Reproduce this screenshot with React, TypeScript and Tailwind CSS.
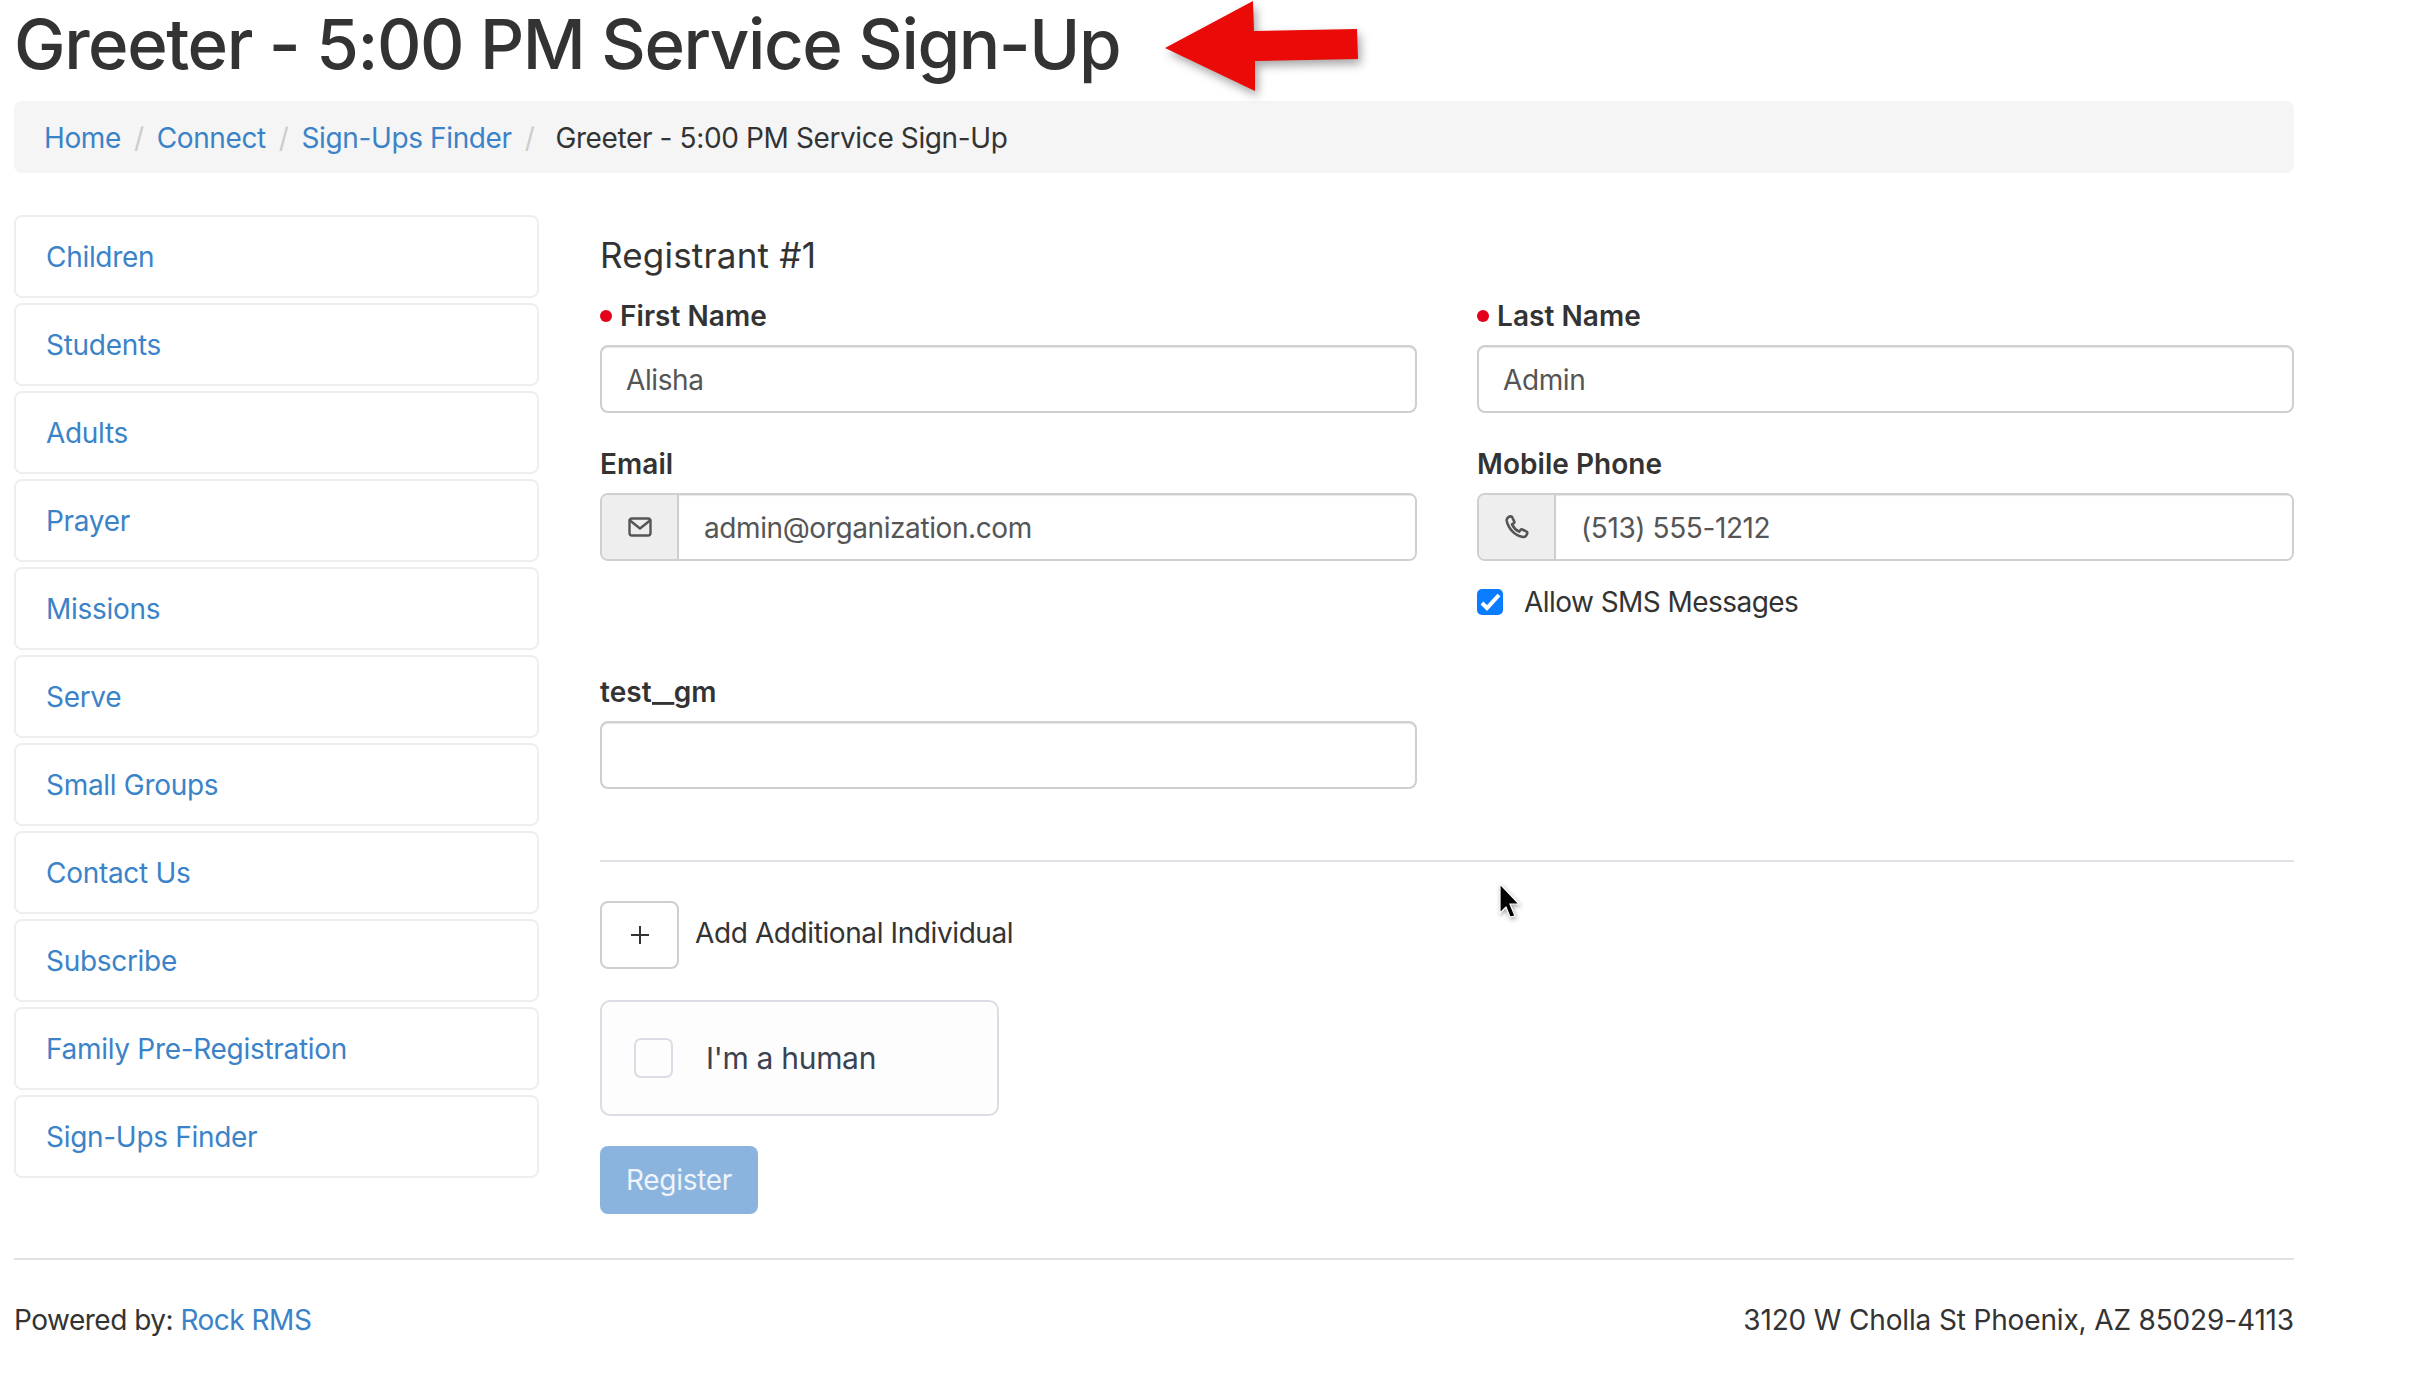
import React from "react";

const items = ["Children","Students","Adults","Prayer","Missions","Serve","Small Groups","Contact Us","Subscribe","Family Pre-Registration","Sign-Ups Finder"];

function MailIcon() {
  return (
    <svg width="24" height="20" viewBox="0 0 24 20" fill="none" stroke="#555" strokeWidth="2.4" strokeLinejoin="round" strokeLinecap="round">
      <rect x="1.5" y="1.5" width="21" height="17" rx="2.5" />
      <path d="M2 3.5 L12 11.5 L22 3.5" />
    </svg>
  );
}

function PhoneIcon() {
  return (
    <svg width="26" height="26" viewBox="0 0 24 24" fill="none" stroke="#555" strokeWidth="2.4" strokeLinejoin="round" strokeLinecap="round">
      <path d="M2.5 6.2C2.2 4.4 4 2.4 6 2.2c.9-.1 1.4.3 1.7 1l1.7 3.6c.3.7.1 1.3-.5 1.7L7.4 9.6c1.3 2.9 3.7 5.3 6.6 6.7l1.2-1.5c.4-.6 1.1-.8 1.7-.5l3.6 1.7c.7.3 1.1.9 1 1.7-.2 2-2.1 3.9-4 3.5C10 19.9 4 13.6 2.5 6.2Z" />
    </svg>
  );
}

function Label({ children, required }: { children: React.ReactNode; required?: boolean }) {
  return (
    <div className="h-[40px] mb-[10px] pt-[1px] flex items-center text-[28px] leading-[40px] font-semibold tracking-[0.05px] text-[#333]">
      {required && <span className="w-[12px] h-[12px] rounded-full bg-[#e2001a] mr-[8px]" />}
      <span>{children}</span>
    </div>
  );
}

function TextInput({ value }: { value: string }) {
  return (
    <input readOnly defaultValue={value} className="block w-full h-[68px] px-[24px] pt-[1px] text-[28px] tracking-[-0.4px] text-[#555] bg-white border-2 border-[#cfcfcf] rounded-[8px] outline-none shadow-[inset_0_1px_1px_rgba(0,0,0,0.1)]" />
  );
}

function AddonInput({ value, icon }: { value: string; icon: React.ReactNode }) {
  return (
    <div className="flex h-[68px] border-2 border-[#cfcfcf] rounded-[8px] overflow-hidden">
      <div className="w-[77px] shrink-0 bg-[#eeeeee] border-r-2 border-[#cfcfcf] flex items-center justify-center">{icon}</div>
      <input readOnly defaultValue={value} className="flex-1 px-[25px] pt-[1px] text-[28px] tracking-[-0.4px] text-[#555] bg-white outline-none shadow-[inset_0_1px_1px_rgba(0,0,0,0.1)]" />
    </div>
  );
}

export default function App() {
  return (
    <div className="relative w-[2430px] h-[1390px] bg-white overflow-hidden pl-[14px] text-[#333] text-[28px] tracking-[-0.3px] font-['Inter',sans-serif]">
      <div className="w-[2280px]">
        <h1 className="h-[101px] text-[69px] leading-[88px] tracking-[-1.45px] font-medium text-[#333] whitespace-nowrap">Greeter - 5:00 PM Service Sign-Up</h1>

        <nav className="h-[72px] rounded-[8px] bg-[#f5f5f5] flex items-center pl-[30px] pt-[2px] text-[28px] tracking-[-0.38px]">
          <a className="text-[#3b83c8]">Home</a>
          <span className="text-[#ccc] mx-[13px]">/</span>
          <a className="text-[#3b83c8]">Connect</a>
          <span className="text-[#ccc] mx-[13px]">/</span>
          <a className="text-[#3b83c8]">Sign-Ups Finder</a>
          <span className="text-[#ccc] ml-[13px] mr-[21px]">/</span>
          <span className="text-[#333]">Greeter - 5:00 PM Service Sign-Up</span>
        </nav>

        <div className="flex mt-[42px] gap-[60px]">
          <aside className="w-[525px] shrink-0 flex flex-col gap-[5px]">
            {items.map((t) => (
              <a key={t} className="h-[83px] flex items-center pl-[30px] pt-[1px] border-2 border-[#eeeeee] rounded-[8px] text-[#3b83c8] text-[28px]">{t}</a>
            ))}
          </aside>

          <main className="flex-1 pl-[1px] pt-[20px]">
            <h2 className="h-[40px] mb-[20px] text-[35px] leading-[40px] font-normal tracking-[0.2px] text-[#333]">Registrant #1</h2>
            <div className="grid grid-cols-[817px_817px] gap-x-[60px] gap-y-[30px]">
              <div>
                <Label required>First Name</Label>
                <TextInput value="Alisha" />
              </div>
              <div>
                <Label required>Last Name</Label>
                <TextInput value="Admin" />
              </div>
              <div className="h-[198px]">
                <Label>Email</Label>
                <AddonInput value="admin@organization.com" icon={<MailIcon />} />
              </div>
              <div className="h-[198px]">
                <Label>Mobile Phone</Label>
                <AddonInput value="(513) 555-1212" icon={<PhoneIcon />} />
                <label className="mt-[27px] flex items-center h-[28px] text-[#333] tracking-[-0.55px]">
                  <span className="w-[26px] h-[26px] mr-[21px] rounded-[5px] bg-[#0a7cff] flex items-center justify-center shrink-0">
                    <svg width="26" height="26" viewBox="0 0 26 26" fill="none" stroke="#fff" strokeWidth="4"><path d="M5 14 L10 19 L22 6" /></svg>
                  </span>
                  Allow SMS Messages
                </label>
              </div>
              <div>
                <Label>test<span className="inline-block w-[22px] origin-left scale-x-[1.7]">_</span>gm</Label>
                <TextInput value="" />
              </div>
            </div>

            <hr className="mt-[71px] border-0 h-[2px] bg-[#dee2e6]" />

            <div className="mt-[39px] flex items-center">
              <button className="w-[79px] h-[68px] bg-white border-2 border-[#cfcfcf] rounded-[8px] flex items-center justify-center">
                <svg width="20" height="20" viewBox="0 0 20 20" stroke="#333" strokeWidth="2"><path d="M10 1v18M1 10h18" /></svg>
              </button>
              <span className="ml-[16px] mb-[5px] text-[#333] tracking-[-0.4px]">Add Additional Individual</span>
            </div>

            <div className="mt-[31px] w-[399px] h-[116px] bg-[#fdfdfd] border-2 border-[#dcdce6] rounded-[10px] flex items-center pl-[32px]">
              <span className="w-[39px] h-[40px] bg-[#fdfdfd] border-2 border-[#dcdce6] rounded-[7px]" />
              <span className="ml-[33px] text-[30px] text-[#3b4252]">I'm a human</span>
            </div>

            <button className="mt-[30px] block w-[158px] h-[68px] rounded-[8px] bg-[#8ab3dd] text-[#eef4fb] text-[28px]">Register</button>
          </main>
        </div>

        <hr className="mt-[44px] border-0 h-[2px] bg-[#e2e2e2]" />
        <footer className="mt-[40px] flex justify-between text-[28px] leading-[40px] text-[#333]">
          <span className="tracking-[-0.5px]">Powered by: <a className="text-[#3b83c8]">Rock RMS</a></span>
          <span className="tracking-[-0.15px]">3120 W Cholla St Phoenix, AZ 85029-4113</span>
        </footer>
      </div>

      <svg className="absolute left-[1150px] top-0" width="225" height="105" viewBox="0 0 225 105" style={{ filter: "drop-shadow(3px 5px 5px rgba(0,0,0,0.35))" }}>
        <path d="M15 48 L103 1 L104 31 L207 29 L208 59 L105 61 L105 91 Z" fill="#ea0a08" />
      </svg>

      <svg className="absolute left-[1495px] top-[880px]" width="32" height="44" viewBox="0 0 32 44" style={{ filter: "drop-shadow(1px 2px 2px rgba(0,0,0,0.35))" }}>
        <path d="M5 4 L24 24 L15 24 L20 36 L15 37 L11 27 L5 33 Z" fill="#000" stroke="#fff" strokeWidth="1.2" />
      </svg>
    </div>
  );
}
